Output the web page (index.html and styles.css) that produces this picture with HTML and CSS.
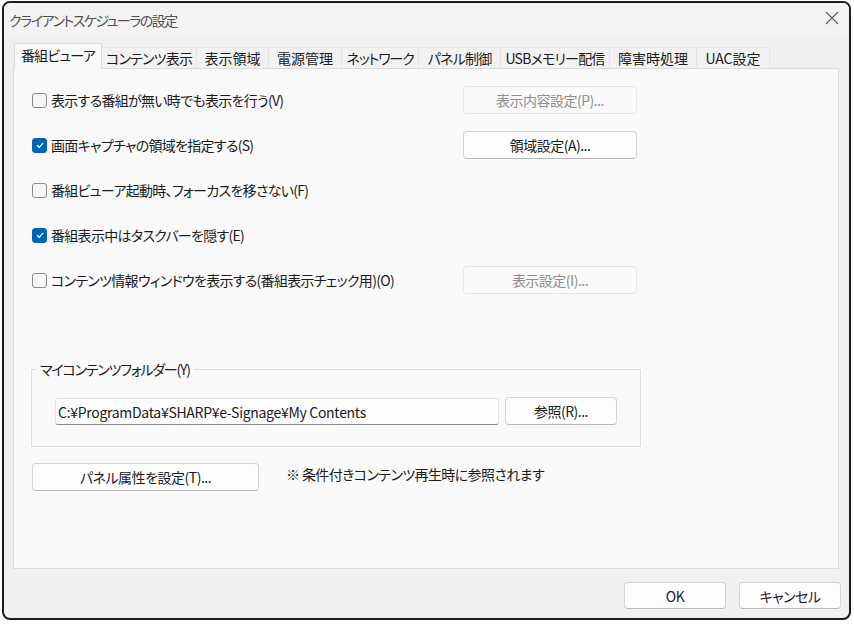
FILE: index.html
```html
<!DOCTYPE html>
<html lang="ja">
<head>
<meta charset="utf-8">
<title>クライアントスケジューラの設定</title>
<link rel="stylesheet" href="styles.css">
</head>
<body>
<div class="window">
  <div class="titlebar">
    <span class="title">クライアントスケジューラの設定</span>
    <span class="close">
      <svg width="14" height="14" viewBox="0 0 14 14"><path d="M1 1 L13 13 M13 1 L1 13" stroke="#5c5c5c" stroke-width="1.1" fill="none"/></svg>
    </span>
  </div>
  <div class="body">
    <div class="tabs">
      <div class="tab active">番組ビューア</div>
      <div class="tab">コンテンツ表示</div>
      <div class="tab">表示領域</div>
      <div class="tab">電源管理</div>
      <div class="tab">ネットワーク</div>
      <div class="tab">パネル制御</div>
      <div class="tab">USBメモリー配信</div>
      <div class="tab">障害時処理</div>
      <div class="tab">UAC設定</div>
    </div>
    <div class="panel">
      <div class="rows">
        <div class="row">
          <label class="check"><span class="box"></span><span>表示する番組が無い時でも表示を行う(V)</span></label>
          <button class="btn wide disabled">表示内容設定(P)...</button>
        </div>
        <div class="row">
          <label class="check"><span class="box checked"><svg width="10" height="10" viewBox="0 0 10 10"><path d="M2 5.2 L4.2 7.3 L8.2 2.8" stroke="#fff" stroke-width="1.2" fill="none"/></svg></span><span>画面キャプチャの領域を指定する(S)</span></label>
          <button class="btn wide">領域設定(A)...</button>
        </div>
        <div class="row">
          <label class="check"><span class="box"></span><span>番組ビューア起動時、フォーカスを移さない(F)</span></label>
        </div>
        <div class="row">
          <label class="check"><span class="box checked"><svg width="10" height="10" viewBox="0 0 10 10"><path d="M2 5.2 L4.2 7.3 L8.2 2.8" stroke="#fff" stroke-width="1.2" fill="none"/></svg></span><span>番組表示中はタスクバーを隠す(E)</span></label>
        </div>
        <div class="row">
          <label class="check"><span class="box"></span><span>コンテンツ情報ウィンドウを表示する(番組表示チェック用)(O)</span></label>
          <button class="btn wide disabled">表示設定(I)...</button>
        </div>
      </div>
      <fieldset class="group">
        <legend>マイコンテンツフォルダー(Y)</legend>
        <div class="group-row">
          <div class="input">C:¥ProgramData¥SHARP¥e-Signage¥My Contents</div>
          <button class="btn browse">参照(R)...</button>
        </div>
      </fieldset>
      <div class="panel-foot">
        <button class="btn panelbtn">パネル属性を設定(T)...</button>
        <span class="note">※ 条件付きコンテンツ再生時に参照されます</span>
      </div>
    </div>
  </div>
  <div class="footer">
    <button class="btn dlg">OK</button>
    <button class="btn dlg">キャンセル</button>
  </div>
</div>
</body>
</html>
```
FILE: styles.css
```css
html, body {
  margin: 0;
  padding: 0;
  background: #ffffff;
}
body {
  font-family: "Noto Sans CJK JP", "Noto Sans", sans-serif;
  font-size: 14px;
  font-feature-settings: "palt";
  letter-spacing: -0.5px;
  color: #1b1b1b;
}
.window {
  box-sizing: border-box;
  width: 849px;
  height: 619px;
  margin: 1px 0 0 2px;
  border: 2px solid #1c1c1c;
  border-radius: 8px;
  background: #f0f0f0;
  display: flex;
  flex-direction: column;
  overflow: hidden;
}
.titlebar {
  height: 32px;
  flex: none;
  display: flex;
  align-items: center;
  justify-content: space-between;
  padding: 0 10px 0 5px;
  background: #f3f3f3;
}
.title {
  color: #505050;
  font-size: 14px;
  letter-spacing: -1.5px;
  line-height: 1;
  margin-top: 1px;
}
.close {
  display: flex;
  width: 14px;
  height: 14px;
  margin-top: -2px;
}
.body {
  flex: 1;
  display: flex;
  flex-direction: column;
  padding: 8px 10px 0 9px;
}
.tabs {
  display: flex;
  align-items: flex-end;
  height: 26px;
  padding-left: 1px;
  margin-bottom: -1px;
}
.tab {
  box-sizing: border-box;
  height: 22px;
  padding: 0 0 1px 0;
  display: flex;
  align-items: center;
  justify-content: center;
  line-height: 1;
  background: #f2f2f2;
  border: 1px solid #e6e6e6;
  border-bottom: none;
  margin-right: -1px;
  white-space: nowrap;
  letter-spacing: -0.8px;
}
.tab:nth-child(1) { width: 88px; }
.tab:nth-child(2) { width: 96px; }
.tab:nth-child(3) { width: 73px; letter-spacing: 0; }
.tab:nth-child(4) { width: 74px; letter-spacing: 0; }
.tab:nth-child(5) { width: 78px; letter-spacing: -1.2px; }
.tab:nth-child(6) { width: 83px; }
.tab:nth-child(7) { width: 110px; }
.tab:nth-child(8) { width: 88px; letter-spacing: 0; }
.tab:nth-child(9) { width: 74px; letter-spacing: 0; }
.tab.active {
  height: 26px;
  background: #f9f9f9;
  border-color: #dcdcdc;
  position: relative;
  z-index: 1;
  padding: 0 0 3px 0;
}
.panel {
  box-sizing: border-box;
  height: 501px;
  background: #f9f9f9;
  border: 1px solid #dcdcdc;
  padding: 17px 0 0 17px;
}
.rows {
  display: flex;
  flex-direction: column;
  gap: 17px;
}
.row {
  height: 28px;
  display: grid;
  grid-template-columns: 432px 174px;
  align-items: center;
}
.check {
  display: flex;
  align-items: center;
  gap: 4px;
  padding-left: 1px;
  white-space: nowrap;
  line-height: 1;
  letter-spacing: -0.7px;
}
.box {
  box-sizing: border-box;
  width: 15px;
  height: 15px;
  border: 1px solid #8a8a8a;
  border-radius: 3px;
  background: #f6f6f6;
  display: flex;
  align-items: center;
  justify-content: center;
  flex: none;
}
.box.checked {
  background: #0063b8;
  border-color: #0063b8;
}
.btn {
  box-sizing: border-box;
  font: inherit;
  font-feature-settings: "palt";
  letter-spacing: -0.5px;
  color: #1b1b1b;
  background: #fdfdfd;
  border: 1px solid #d4d4d4;
  border-bottom-color: #b8b8b8;
  border-radius: 4px;
  height: 28px;
  padding: 0;
  line-height: 1;
  text-align: center;
}
.btn.disabled {
  color: #8e8e8e;
  background: #fafafa;
  border-color: #e6e6e6;
}
.btn.wide {
  width: 174px;
}
.group {
  box-sizing: border-box;
  width: 610px;
  margin: 66px 0 0 0;
  padding: 0 22px 21px 0;
  border: 1px solid #dcdcdc;
  min-width: 0;
}
.group legend {
  margin-left: 4px;
  padding: 0 4px;
  line-height: 18px;
  letter-spacing: -1.2px;
}
.group-row {
  display: flex;
  align-items: flex-end;
  gap: 6px;
  margin: 19px 0 0 23px;
}
.input {
  box-sizing: border-box;
  width: 444px;
  height: 27px;
  background: #fdfdfd;
  border: 1px solid #e2e2e2;
  border-bottom: 1px solid #8a8a8a;
  border-radius: 3px;
  padding: 0 0 0 2px;
  display: flex;
  align-items: center;
  white-space: nowrap;
  line-height: 1;
  letter-spacing: -0.3px;
}
.btn.browse {
  width: 112px;
}
.panel-foot {
  display: flex;
  align-items: center;
  gap: 27px;
  margin-top: 16px;
  padding-left: 1px;
}
.btn.panelbtn {
  width: 227px;
}
.note {
  margin-top: -6px;
  line-height: 1;
  letter-spacing: -0.6px;
}
.footer {
  height: 49px;
  flex: none;
  display: flex;
  justify-content: flex-end;
  gap: 13px;
  padding: 13px 8px 0 0;
  box-sizing: border-box;
}
.btn.dlg {
  width: 102px;
  height: 27px;
}
```
